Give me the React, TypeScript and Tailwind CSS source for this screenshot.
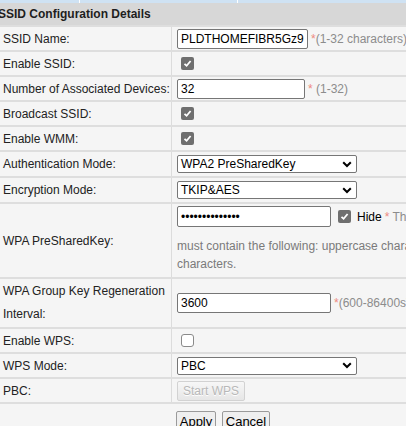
import type { ReactNode } from 'react';

const font = { fontFamily: '"Liberation Sans", Arial, sans-serif' };

function Check({ checked }: { checked: boolean }) {
  if (!checked) {
    return <span className="inline-block w-[13px] h-[13px] ml-[4px] rounded-[3px] border border-[#8a8a8a] bg-white" />;
  }
  return (
    <span className="inline-flex items-center justify-center w-[13px] h-[13px] ml-[4px] rounded-[2px] bg-[#6f6f6f]">
      <svg width="9" height="9" viewBox="0 0 9 9">
        <polyline points="1.5,4.8 3.6,6.8 7.6,2" fill="none" stroke="#fff" strokeWidth="1.8" />
      </svg>
    </span>
  );
}

function TextBox({ value, width, type = 'text' }: { value: string; width: string; type?: string }) {
  return (
    <input
      type={type}
      readOnly
      defaultValue={value}
      className={`${width} h-[20px] border border-[#767676] rounded-[2px] bg-white pl-[3px] text-[12px] text-black outline-none`}
      style={font}
    />
  );
}

function Select({ value }: { value: string }) {
  return (
    <div className="w-[180px] h-[18px] border border-[#767676] rounded-[2px] bg-white flex items-center justify-between pl-[3px] pr-[4px] text-[12px] text-black">
      <span>{value}</span>
      <svg width="10" height="7" viewBox="0 0 10 7">
        <polyline points="1.2,1.2 5,5 8.8,1.2" fill="none" stroke="#000" strokeWidth="2" />
      </svg>
    </div>
  );
}

function Hint({ star, text }: { star: string; text: string }) {
  return (
    <span className="ml-[3px] whitespace-nowrap text-[12px] text-[#8c8c8c]">
      <span className="text-[#ee8a80]">{star}</span>
      {text}
    </span>
  );
}

function Row({ label, children, h = 'h-[25px]' }: { label: ReactNode; children: ReactNode; h?: string }) {
  return (
    <div className={`flex ${h} border-t-2 border-[#dedede]`}>
      <div className="w-[172px] shrink-0 border-r border-[#dcdcdc] flex items-center pl-[3px] text-[12px] text-[#222]">
        {label}
      </div>
      <div className="flex-1 flex items-center pl-[5px]">{children}</div>
    </div>
  );
}

export default function App() {
  return (
    <div className="w-[406px] h-[426px] overflow-hidden bg-[#f5f5f5]" style={font}>
      {/* tab strip edge */}
      <div className="h-[3px] bg-[#cfe2f3] flex">
        <div className="w-[80px] border-r border-white" />
        <div className="w-[158px] border-r border-white" />
      </div>

      <div className="w-[620px]">
        <div className="h-[22px] bg-[#d7d7d7] flex items-center text-[12px] font-bold text-[#1e1e1e]">
          <span className="-ml-[2px]">SSID Configuration Details</span>
        </div>

        <Row label="SSID Name:">
          <TextBox value="PLDTHOMEFIBR5Gz9" width="w-[131px]" />
          <Hint star="*" text="(1-32 characters)" />
        </Row>
        <Row label="Enable SSID:">
          <Check checked />
        </Row>
        <Row label="Number of Associated Devices:">
          <TextBox value="32" width="w-[128px]" />
          <Hint star="*" text=" (1-32)" />
        </Row>
        <Row label="Broadcast SSID:">
          <Check checked />
        </Row>
        <Row label="Enable WMM:">
          <Check checked />
        </Row>
        <Row label="Authentication Mode:" h="h-[26px]">
          <Select value="WPA2 PreSharedKey" />
        </Row>
        <Row label="Encryption Mode:" h="h-[26px]">
          <Select value="TKIP&AES" />
        </Row>

        <div className="flex h-[75px] border-t-2 border-[#dedede]">
          <div className="w-[172px] shrink-0 border-r border-[#dcdcdc] flex items-center pl-[3px] text-[12px] text-[#222]">
            WPA PreSharedKey:
          </div>
          <div className="flex-1 pl-[5px] pt-[2px] text-[12px]">
            <div className="flex items-center h-[21px] whitespace-nowrap">
              <TextBox type="password" value="12345678901234" width="w-[154px] h-[21px]" />
              <span className="ml-[3px]">
                <Check checked />
              </span>
              <span className="ml-[6px] text-black">Hide</span>
              <Hint star=" *" text=" The password" />
            </div>
            <div className="mt-[10px] leading-[18px] whitespace-nowrap text-[#7a7a7a]">
              must contain the following: uppercase characters, lowercase characters, digits, special
            </div>
            <div className="leading-[18px] text-[#7a7a7a]">characters.</div>
          </div>
        </div>

        <div className="flex h-[50px] border-t-2 border-[#dedede]">
          <div className="w-[172px] shrink-0 border-r border-[#dcdcdc] flex items-center pl-[3px] pr-[2px] text-[12px] leading-[23px] text-[#222]">
            WPA Group Key Regeneration Interval:
          </div>
          <div className="flex-1 flex items-center pl-[5px]">
            <TextBox value="3600" width="w-[154px]" />
            <Hint star="*" text="(600-86400s)" />
          </div>
        </div>

        <Row label="Enable WPS:">
          <Check checked={false} />
        </Row>
        <Row label="WPS Mode:">
          <Select value="PBC" />
        </Row>
        <Row label="PBC:">
          <button
            disabled
            className="w-[68px] h-[20px] border border-[#d2d2d2] rounded-[2px] bg-gradient-to-b from-[#f7f7f7] to-[#e6e6e6] text-[12px] text-[#b8b8b8]"
            style={{ ...font, textShadow: '0 1px 0 #fff' }}
          >
            Start WPS
          </button>
        </Row>

        <div className="border-t-2 border-[#dedede] pt-[7px] pl-[176px] flex gap-[6px]">
          <button className="w-[40px] h-[21px] border border-[#9a9a9a] rounded-[2px] bg-[#efefef] text-[13px] text-black" style={font}>
            Apply
          </button>
          <button className="w-[48px] h-[21px] border border-[#9a9a9a] rounded-[2px] bg-[#efefef] text-[13px] text-black" style={font}>
            Cancel
          </button>
        </div>
      </div>
    </div>
  );
}
